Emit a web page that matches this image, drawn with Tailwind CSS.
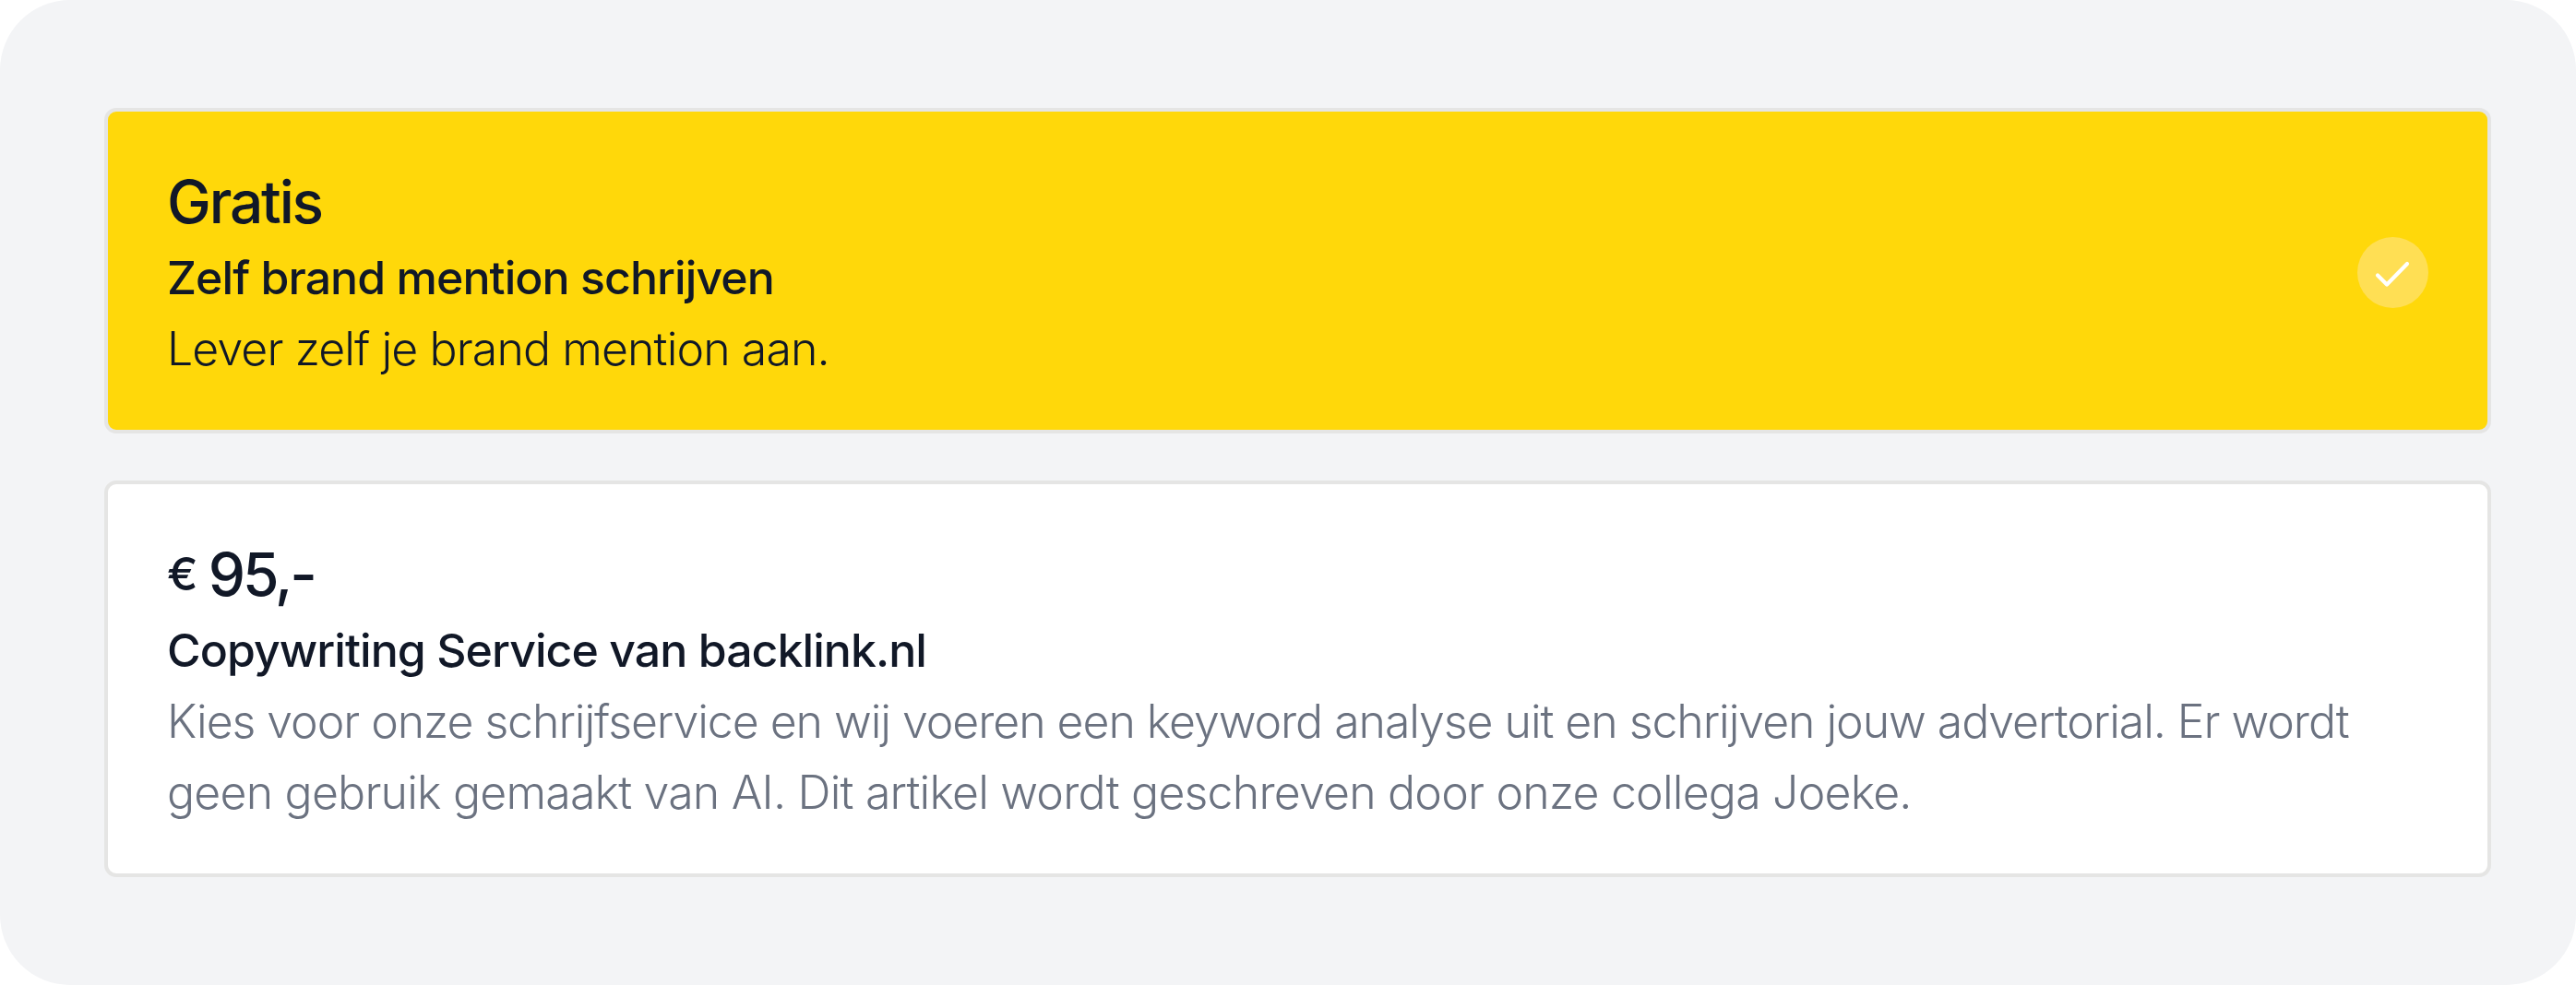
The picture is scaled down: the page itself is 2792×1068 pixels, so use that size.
<!DOCTYPE html>
<html lang="nl">
<head>
    <meta charset="UTF-8">
    <meta name="viewport" content="width=device-width, initial-scale=1.0">
    <title>Brand mention - Tekst</title>
    <script src="https://cdn.jsdelivr.net/npm/@tailwindcss/browser@4"></script>
</head>
<body class="bg-white font-['Inter',sans-serif]">
    <main class="flex h-[1068px] w-[2792px] flex-col gap-[51px] rounded-[76px] bg-gray-100 pt-[117px] pr-[92px] pl-[113px] text-[50px] leading-[77px] text-[#111827]">
        <!-- Zelf schrijven (geselecteerd) -->
        <div class="flex h-[353px] items-center justify-between rounded-[13px] border-4 border-[#e5e5e4] bg-[#ffd80a] px-16">
            <div class="h-full pt-[59px]">
                <h2 class="text-[64px] leading-[77px] font-medium tracking-[-2.2px]">Gratis</h2>
                <h3 class="mt-1.5 font-medium tracking-[-0.95px]">Zelf brand mention schrijven</h3>
                <p class="font-light tracking-[-0.9px]">Lever zelf je brand mention aan.</p>
            </div>
            <div class="mt-1 flex size-[77px] items-center justify-center rounded-full bg-[#ffdf54]">
                <svg class="size-[77px]" viewBox="0 0 77 77" fill="none" stroke="white" stroke-width="4.2" stroke-linecap="round" stroke-linejoin="round">
                    <path d="M22 41.5L32 51.5L54 29" />
                </svg>
            </div>
        </div>
        <!-- Copywriting service -->
        <div class="h-[430px] rounded-[13px] border-4 border-[#e5e5e4] bg-white px-16 pt-[59px]">
            <h2 class="flex gap-[11px] leading-[77px] font-medium">
                <span>€</span>
                <span class="text-[64px] tracking-[-3px]">95,-</span>
            </h2>
            <h3 class="mt-1.5 font-medium tracking-[-0.95px]">Copywriting Service van backlink.nl</h3>
            <p class="font-light tracking-[-1.06px] whitespace-nowrap text-[#6b7280]">Kies voor onze schrijfservice en wij voeren een keyword analyse uit en schrijven jouw advertorial. Er wordt</p>
            <p class="font-light tracking-[-0.8px] whitespace-nowrap text-[#6b7280]">geen gebruik gemaakt van AI. Dit artikel wordt geschreven door onze collega Joeke.</p>
        </div>
    </main>
</body>
</html>
